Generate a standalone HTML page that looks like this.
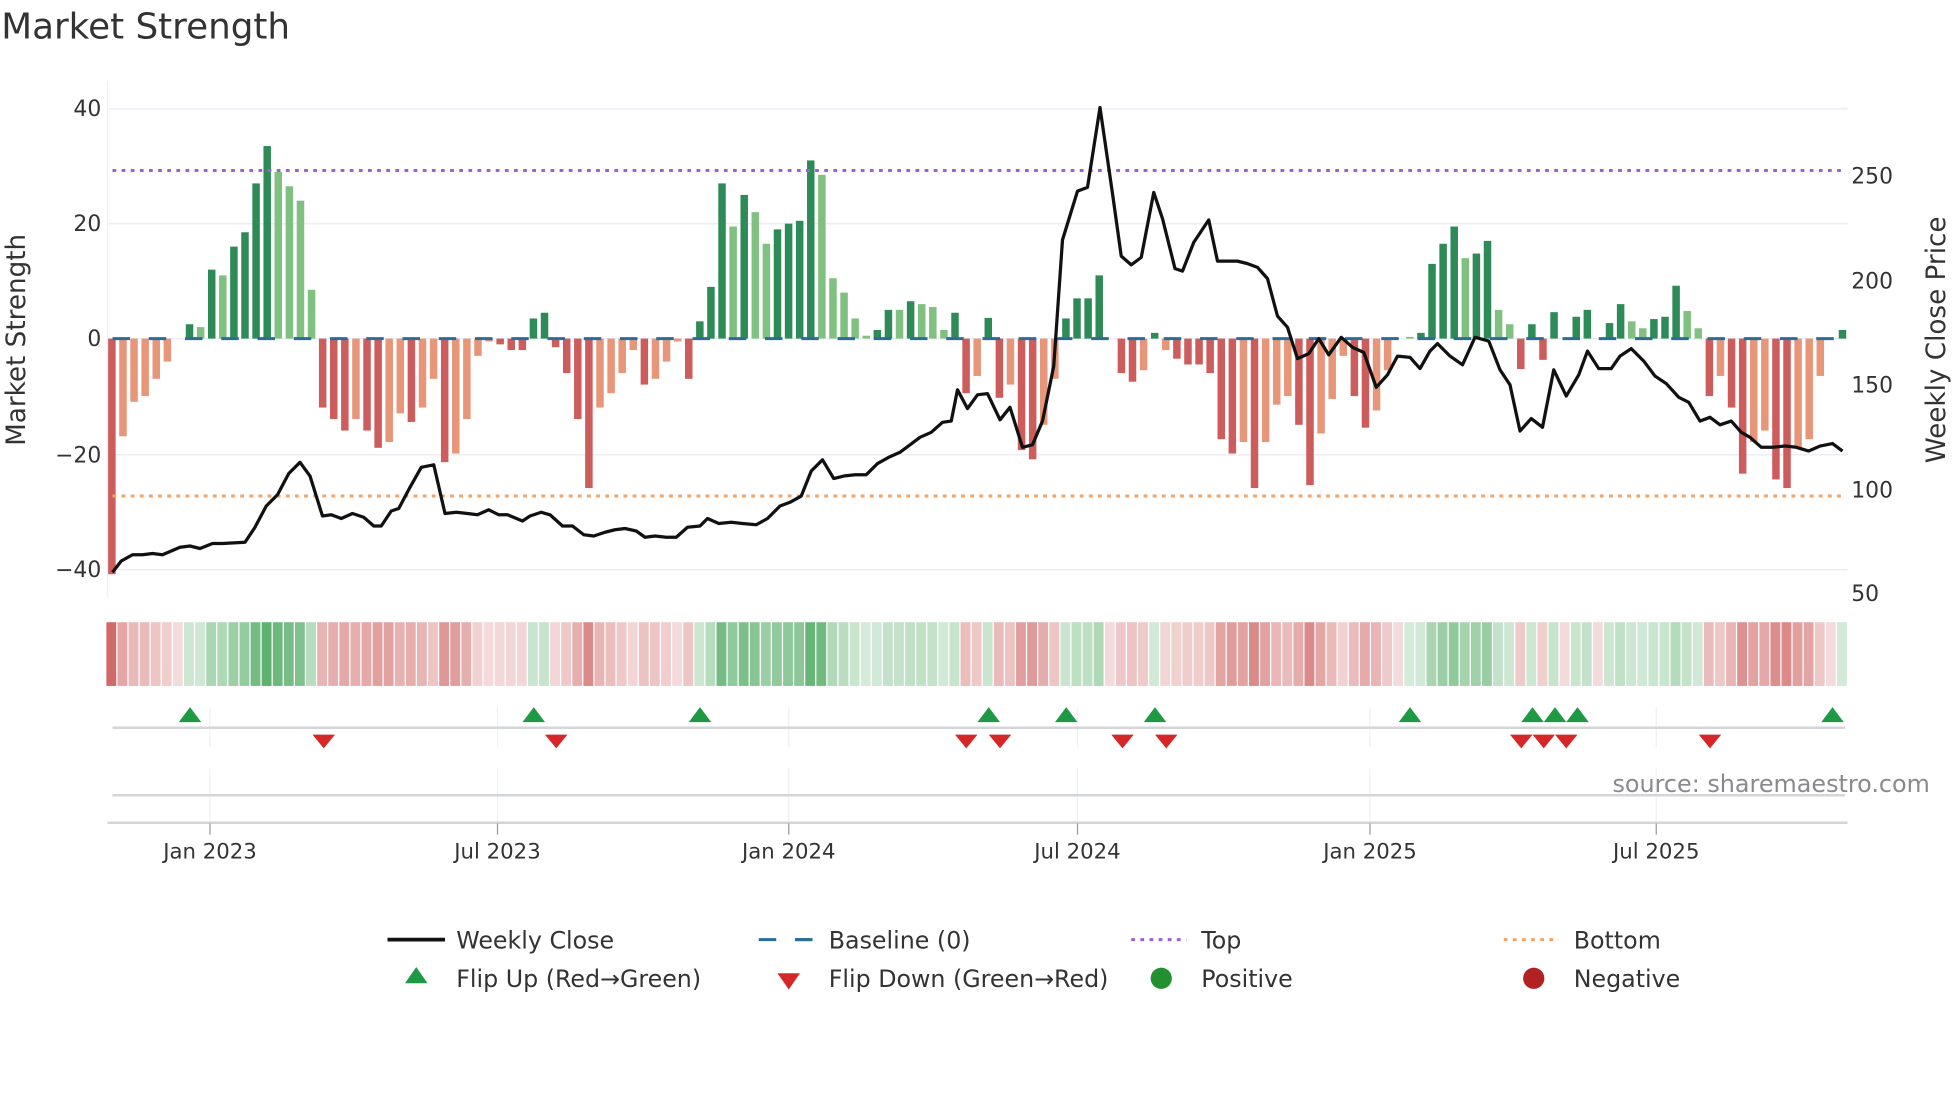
<!DOCTYPE html>
<html><head><meta charset="utf-8"><style>
html,body{margin:0;padding:0;background:#fff;width:1960px;height:1102px;overflow:hidden}
svg{display:block}
text{font-family:"DejaVu Sans","Liberation Sans",sans-serif;fill:#333}
</style></head><body>
<svg id="s" width="1960" height="1102" viewBox="0 0 1568 882" preserveAspectRatio="none" xmlns="http://www.w3.org/2000/svg">
<rect width="1568" height="882" fill="#fff"/>
<text x="1" y="31" font-size="28.6" fill="#333">Market Strength</text>
<g stroke="#eceef3" stroke-width="1.2">
<line x1="87" y1="87" x2="1478" y2="87"/><line x1="87" y1="179" x2="1478" y2="179"/>
<line x1="87" y1="271" x2="1478" y2="271"/><line x1="87" y1="364" x2="1478" y2="364"/>
<line x1="87" y1="456" x2="1478" y2="456"/>
</g>
<line x1="86" y1="65" x2="86" y2="478" stroke="#eef0f3" stroke-width="1"/>
<g font-size="17.5" text-anchor="end">
<text x="81" y="93">40</text><text x="81" y="185">20</text><text x="81" y="277">0</text>
<text x="81" y="370">−20</text><text x="81" y="462">−40</text>
</g>
<g font-size="17.5">
<text x="1481" y="147">250</text><text x="1481" y="231">200</text><text x="1481" y="314">150</text>
<text x="1481" y="398">100</text><text x="1481" y="481">50</text>
</g>
<text transform="translate(20,272) rotate(-90)" font-size="21" text-anchor="middle">Market Strength</text>
<text transform="translate(1556,272) rotate(-90)" font-size="21" text-anchor="middle">Weekly Close Price</text>
<g id="bars"></g>
<line x1="90" y1="271" x2="1476" y2="271" stroke="#2a6c9a" stroke-width="2.4" stroke-dasharray="14 15"/>
<line x1="90" y1="136.5" x2="1476" y2="136.5" stroke="#9d5fd6" stroke-width="2.4" stroke-dasharray="3 4.3"/>
<line x1="90" y1="397" x2="1476" y2="397" stroke="#f4a261" stroke-width="2.4" stroke-dasharray="3 4.3"/>
<polyline id="price" fill="none" stroke="#111" stroke-width="2.6" stroke-linejoin="round" points="90,458 97,449 106,444 114,444 122,443 130,444 137,441 144,438 152,437 160,439 170,435 178,435 196,434 204,422 213,405 222,396 231,379 240,370 248,381 258,413 265,412 273,415 282,411 291,414 299,421 305,421 313,409 319,407 328,390 337,374 347,372 356,411 365,410 374,411 382,412 391,408 399,412 406,412 418,417 424,413 433,410 440,412 450,421 458,421 467,428 475,429 484,426 492,424 500,423 509,425 516,430 524,429 533,430 541,430 550,422 560,421 566,415 575,419 585,418 594,419 605,420 614,415 624,405 632,402 641,397 649,377 658,368 667,383 675,381 684,380 693,380 702,371 711,366 720,362 728,356 736,350 745,346 754,338 761,337 766,312 774,327 782,316 790,315 800,336 808,326 818,358 826,356 834,337 843,293 850,192 862,153 870,150 880,86 890,155 897,205 905,212 913,206 923,154 930,175 940,215 946,217 955,194 967,176 974,209 983,209 990,209 998,211 1006,214 1014,223 1022,253 1030,262 1038,287 1047,283 1055,271 1063,284 1073,270 1082,278 1091,282 1101,310 1110,300 1118,285 1128,286 1136,295 1144,281 1150,275 1160,285 1170,292 1180,270 1191,273 1200,296 1208,308 1216,345 1225,335 1234,342 1243,296 1253,317 1263,300 1270,281 1279,295 1289,295 1296,285 1305,279 1315,289 1324,301 1333,307 1343,318 1351,322 1360,337 1368,334 1376,340 1385,337 1393,346 1400,350 1409,358 1418,358 1428,357 1437,358 1447,361 1456,357 1466,355 1474,361"/>
<g id="strip"></g>
<g stroke="#eef0f3" stroke-width="1">
<line x1="168" y1="566" x2="168" y2="598"/><line x1="398" y1="566" x2="398" y2="598"/>
<line x1="631" y1="566" x2="631" y2="598"/><line x1="862" y1="566" x2="862" y2="598"/>
<line x1="1096" y1="566" x2="1096" y2="598"/><line x1="1325" y1="566" x2="1325" y2="598"/>
<line x1="168" y1="615" x2="168" y2="658"/><line x1="398" y1="615" x2="398" y2="658"/>
<line x1="631" y1="615" x2="631" y2="658"/><line x1="862" y1="615" x2="862" y2="658"/>
<line x1="1096" y1="615" x2="1096" y2="658"/><line x1="1325" y1="615" x2="1325" y2="658"/>
</g>
<line x1="90" y1="582.5" x2="1476" y2="582.5" stroke="#d3d5d8" stroke-width="2"/>
<line x1="90" y1="636.5" x2="1476" y2="636.5" stroke="#d3d5d8" stroke-width="2"/>
<line x1="86" y1="658.5" x2="1478" y2="658.5" stroke="#d3d5d8" stroke-width="2"/>
<g id="flips"></g>
<g stroke="#999" stroke-width="1">
<line x1="168" y1="659" x2="168" y2="668"/><line x1="398" y1="659" x2="398" y2="668"/>
<line x1="631" y1="659" x2="631" y2="668"/><line x1="862" y1="659" x2="862" y2="668"/>
<line x1="1096" y1="659" x2="1096" y2="668"/><line x1="1325" y1="659" x2="1325" y2="668"/>
</g>
<g font-size="17" text-anchor="middle">
<text x="168" y="687">Jan 2023</text><text x="398" y="687">Jul 2023</text><text x="631" y="687">Jan 2024</text>
<text x="862" y="687">Jul 2024</text><text x="1096" y="687">Jan 2025</text><text x="1325" y="687">Jul 2025</text>
</g>
<text x="1290" y="634" font-size="19.1" style="fill:#8a8a8a">source: sharemaestro.com</text>
<g font-size="19">
<line x1="310" y1="752" x2="356" y2="752" stroke="#111" stroke-width="3"/>
<text x="365" y="759">Weekly Close</text>
<line x1="607" y1="752" x2="652" y2="752" stroke="#2a6c9a" stroke-width="2.4" stroke-dasharray="14 15"/>
<line x1="636" y1="752" x2="650" y2="752" stroke="#2a6c9a" stroke-width="2.4"/>
<text x="663" y="759">Baseline (0)</text>
<line x1="905" y1="752" x2="949" y2="752" stroke="#9d5fd6" stroke-width="2.4" stroke-dasharray="3 4.3"/>
<text x="961" y="759">Top</text>
<line x1="1203" y1="752" x2="1247" y2="752" stroke="#f4a261" stroke-width="2.4" stroke-dasharray="3 4.3"/>
<text x="1259" y="759">Bottom</text>
<polygon points="333,774 342,787 324,787" fill="#1e9a44"/>
<text x="365" y="790">Flip Up (Red→Green)</text>
<polygon points="622,779 640,779 631,792" fill="#d62728"/>
<text x="663" y="790">Flip Down (Green→Red)</text>
<circle cx="929" cy="783" r="8.5" fill="#22902f"/>
<text x="961" y="790">Positive</text>
<circle cx="1227" cy="783" r="8.5" fill="#b22222"/>
<text x="1259" y="790">Negative</text>
</g>
</svg>
<script>
var V="-41D,-17L,-11L,-10L,-7L,-4L,0L,2.5D,2L,12D,11L,16D,18.5D,27D,33.5D,29L,26.5L,24L,8.5L,-12D,-14D,-16D,-14L,-16D,-19D,-18L,-13L,-14.5D,-12L,-7L,-21.5D,-20L,-14L,-3L,-0.5L,-1D,-2D,-2D,3.5D,4.5D,-1.5D,-6D,-14D,-26D,-12L,-9.5L,-6L,-2L,-8D,-7L,-4L,-0.5L,-7D,3D,9D,27D,19.5L,25D,22L,16.5L,19D,20D,20.5D,31D,28.5L,10.5L,8L,3.5L,0.5L,1.5D,5D,5L,6.5D,6L,5.5L,1.5L,4.5D,-9.5D,-6.5L,3.6D,-10.3D,-8L,-19.4D,-21D,-15L,-7L,3.5D,7D,7D,11D,0L,-6D,-7.5D,-5.5L,1D,-2L,-3.5D,-4.5D,-4.5D,-6D,-17.5D,-20D,-18L,-26D,-18L,-11.5L,-10L,-15D,-25.5D,-16.5L,-10.5L,-3L,-10D,-15.5D,-12.5L,-5.5L,0L,0.3L,1D,13D,16.5D,19.5D,14L,14.8D,17D,5L,2.5L,-5.3D,2.5D,-3.7D,4.6D,0L,3.8D,5D,0L,2.7D,6D,3L,1.8L,3.4D,3.8D,9.2D,4.8L,1.8L,-10D,-6.5L,-12D,-23.5D,-18L,-16L,-24.5D,-26D,-19L,-17.5L,-6.5L,0L,1.5D".split(",");
var NS="http://www.w3.org/2000/svg";
function el(t,a,p){var e=document.createElementNS(NS,t);for(var k in a)e.setAttribute(k,a[k]);document.getElementById(p).appendChild(e);}
var sp=(1474-89.5)/156;
function mix(c,t){var r=Math.round(255+(c[0]-255)*t),g=Math.round(255+(c[1]-255)*t),b=Math.round(255+(c[2]-255)*t);return "rgb("+r+","+g+","+b+")";}
for(var i=0;i<V.length;i++){
 var s=V[i],v=parseFloat(s),d=s.slice(-1)=="D",cx=89.5+i*sp;
 var col=v>=0?(d?"#2e8b57":"#80c080"):(d?"#cd5c5c":"#e8967a");
 if(v!==0){var y0=271,y1=271-v*4.6;el("rect",{x:cx-3,y:Math.min(y0,y1),width:6,height:Math.abs(y1-y0),fill:col},"bars");}
 var t=Math.min(Math.abs(v)/36,1);t=0.22+0.7*t;
 var base=v>0?[70,165,90]:[205,92,92];
 el("rect",{x:cx-4.4,y:498,width:sp-1,height:51,fill:mix(base,t)},"strip");
}
[152,427,560,791,853,924,1128,1226,1244,1262,1466].forEach(function(x){el("polygon",{points:(x)+",566 "+(x+9)+",578 "+(x-9)+",578",fill:"#1e9a44"},"flips");});
[259,445,773,800,898,933,1217,1235,1253,1368].forEach(function(x){el("polygon",{points:(x-9)+",588 "+(x+9)+",588 "+x+",599",fill:"#d62728"},"flips");});
</script>
</body></html>
